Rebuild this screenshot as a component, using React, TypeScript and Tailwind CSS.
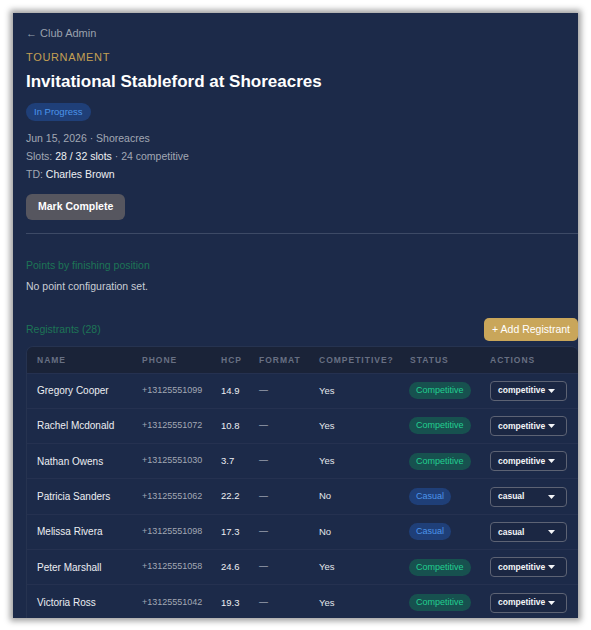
import React from "react";

type Registrant = {
  name: string;
  phone: string;
  hcp: string;
  competitive: boolean;
};

const registrants: Registrant[] = [
  { name: "Gregory Cooper", phone: "+13125551099", hcp: "14.9", competitive: true },
  { name: "Rachel Mcdonald", phone: "+13125551072", hcp: "10.8", competitive: true },
  { name: "Nathan Owens", phone: "+13125551030", hcp: "3.7", competitive: true },
  { name: "Patricia Sanders", phone: "+13125551062", hcp: "22.2", competitive: false },
  { name: "Melissa Rivera", phone: "+13125551098", hcp: "17.3", competitive: false },
  { name: "Peter Marshall", phone: "+13125551058", hcp: "24.6", competitive: true },
  { name: "Victoria Ross", phone: "+13125551042", hcp: "19.3", competitive: true },
];

function StatusBadge({ competitive }: { competitive: boolean }) {
  return competitive ? (
    <span className="flex h-[17px] items-center rounded-full bg-[#17514f] px-[7px] text-[9px] leading-none text-[#22cf8f]">
      Competitive
    </span>
  ) : (
    <span className="flex h-[17px] items-center rounded-full bg-[#1f3f78] px-[7px] text-[9px] leading-none text-[#4c95ea]">
      Casual
    </span>
  );
}

function RoleSelect({ value }: { value: string }) {
  return (
    <div className="flex h-[20px] w-[77px] items-center justify-between rounded-[4px] border border-[#5d6374] bg-[#1b2743] pl-[7px] pr-[11px]">
      <span className="text-[8.5px] font-semibold leading-none text-[#f4f5f8]">{value}</span>
      <svg width="7" height="4" viewBox="0 0 7 4" className="shrink-0">
        <path d="M0 0h7L3.5 4z" fill="#f4f5f8" />
      </svg>
    </div>
  );
}

export default function App() {
  return (
    <div
      className="h-[630px] w-[591px] overflow-hidden bg-white pl-[13px] pt-[13px]"
      style={{ fontFamily: '"Liberation Sans", Arial, sans-serif' }}
    >
      <div className="h-[605px] w-[565px] overflow-hidden bg-[#1c2a49] pl-[13px] pt-[12px] shadow-[0_0_6px_3px_rgba(0,0,0,0.38)]">
        <div className="w-[552px]">
          <div className="text-[11px] leading-[16px] text-[#9aa1ad]">← Club Admin</div>
          <div className="mt-[8px] text-[11px] leading-[16px] tracking-[0.06em] text-[#c4a053]">
            TOURNAMENT
          </div>
          <h1 className="mt-[5px] text-[17px] font-bold leading-[24px] text-white">
            Invitational Stableford at Shoreacres
          </h1>
          <div className="mt-[9px] flex">
            <span className="flex h-[18px] items-center rounded-full bg-[#1f3f78] px-[8px] text-[9.5px] leading-none text-[#4c95ea]">
              In Progress
            </span>
          </div>
          <div className="mt-[8px] text-[10.5px] leading-[18px] text-[#a2a8b4]">
            <div>Jun 15, 2026 · Shoreacres</div>
            <div>
              Slots: <span className="text-[#eef0f3]">28 / 32 slots</span> · 24 competitive
            </div>
            <div>
              TD: <span className="text-[#eef0f3]">Charles Brown</span>
            </div>
          </div>
          <button
            type="button"
            className="mt-[11px] h-[26px] rounded-[6px] bg-[#56565f] px-[12px] text-[10.5px] font-bold text-white"
          >
            Mark Complete
          </button>
          <div className="mt-[13px] border-t border-[#3d4a66]" />

          <div className="mt-[23px] text-[10.5px] leading-[16px] text-[#1d7556]">
            Points by finishing position
          </div>
          <div className="mt-[5px] text-[10.5px] leading-[16px] text-[#c9cdd5]">
            No point configuration set.
          </div>

          <div className="mt-[24px] flex items-center justify-between">
            <span className="text-[10.5px] text-[#1d7556]">Registrants (28)</span>
            <button
              type="button"
              className="h-[23px] rounded-[5px] bg-[#c9a65a] px-[8px] text-[10.5px] text-white"
            >
              + Add Registrant
            </button>
          </div>

          <div className="mt-[5px] overflow-hidden rounded-t-[7px] border-l border-t border-[#263350]">
            <table className="w-full table-fixed border-collapse">
              <colgroup>
                <col className="w-[105px]" />
                <col className="w-[79px]" />
                <col className="w-[38px]" />
                <col className="w-[60px]" />
                <col className="w-[91px]" />
                <col className="w-[80px]" />
                <col />
              </colgroup>
              <thead>
                <tr className="h-[26px] bg-[#1a2338] text-left text-[8.5px] font-bold uppercase tracking-[1px] text-[#687083]">
                  <th className="pl-[10px] pt-[1px] font-bold">Name</th>
                  <th className="pl-[10px] pt-[1px] font-bold">Phone</th>
                  <th className="pl-[10px] pt-[1px] font-bold">HCP</th>
                  <th className="pl-[10px] pt-[1px] font-bold">Format</th>
                  <th className="pl-[10px] pt-[1px] font-bold">Competitive?</th>
                  <th className="pl-[10px] pt-[1px] font-bold">Status</th>
                  <th className="pl-[10px] pt-[1px] font-bold">Actions</th>
                </tr>
              </thead>
              <tbody>
                {registrants.map((r) => (
                  <tr key={r.name} className="h-[35.3px] border-t border-[#253150]">
                    <td className="whitespace-nowrap pl-[10px] text-[10px] text-[#eceef2]">{r.name}</td>
                    <td className="pl-[10px] text-[9px] text-[#a2a8b4]">{r.phone}</td>
                    <td className="pl-[10px] text-[9.5px] text-[#eceef2]">{r.hcp}</td>
                    <td className="pl-[10px] text-[9px] text-[#c9cdd5]">—</td>
                    <td className="pl-[10px] text-[9.5px] text-[#e3e6eb]">{r.competitive ? "Yes" : "No"}</td>
                    <td className="pl-[9px]">
                      <div className="flex items-center">
                        <StatusBadge competitive={r.competitive} />
                      </div>
                    </td>
                    <td className="pl-[10px]">
                      <RoleSelect value={r.competitive ? "competitive" : "casual"} />
                    </td>
                  </tr>
                ))}
              </tbody>
            </table>
          </div>
        </div>
      </div>
    </div>
  );
}
